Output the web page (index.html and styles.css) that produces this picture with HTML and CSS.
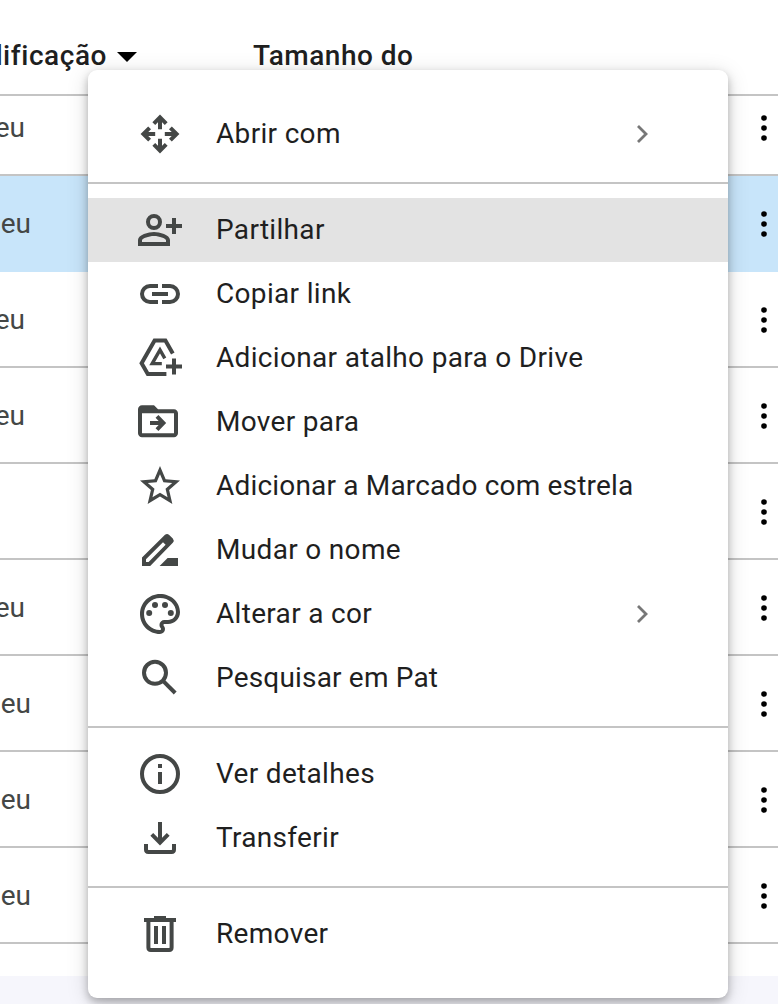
FILE: index.html
```html
<!DOCTYPE html>
<html lang="pt">
<head>
  <meta charset="UTF-8">
  <meta name="viewport" content="width=device-width, initial-scale=1.0">
  <title>Drive</title>
  <link rel="stylesheet" href="styles.css">
</head>
<body>
  <svg class="defs">
    <symbol id="dots" viewBox="0 0 8 28">
      <circle cx="4" cy="4" r="2.8"/><circle cx="4" cy="14" r="2.8"/><circle cx="4" cy="24" r="2.8"/>
    </symbol>
    <symbol id="chevron" viewBox="0 0 12 20">
      <path d="M2 2l8 8-8 8" fill="none" stroke="currentColor" stroke-width="2.8"/>
    </symbol>
  </svg>

  <!-- file list -->
  <main class="files">
    <div class="files-header">
      <div class="col-date"><span>dificação</span></div>
      <svg class="caret" viewBox="0 0 20 10"><path d="M0 0h20L10 10z"/></svg>
      <div class="col-size">Tamanho do</div>
    </div>
    <div class="row first"><span class="owner cut">eu</span><svg class="dots"><use href="#dots"/></svg></div>
    <div class="row selected"><span class="owner">eu</span><svg class="dots"><use href="#dots"/></svg></div>
    <div class="row"><span class="owner cut">eu</span><svg class="dots"><use href="#dots"/></svg></div>
    <div class="row"><span class="owner cut">eu</span><svg class="dots"><use href="#dots"/></svg></div>
    <div class="row"><span class="owner"></span><svg class="dots"><use href="#dots"/></svg></div>
    <div class="row"><span class="owner cut">eu</span><svg class="dots"><use href="#dots"/></svg></div>
    <div class="row"><span class="owner">eu</span><svg class="dots"><use href="#dots"/></svg></div>
    <div class="row"><span class="owner">eu</span><svg class="dots"><use href="#dots"/></svg></div>
    <div class="row"><span class="owner">eu</span><svg class="dots"><use href="#dots"/></svg></div>
  </main>

  <!-- context menu -->
  <nav class="menu">
    <div class="item">
      <svg class="icon line" viewBox="0 0 24 24"><path d="M12 9.6V4M8.9 6.8L12 3.7l3.1 3.1M12 14.4V20M8.9 17.2l3.1 3.1 3.1-3.1M9.6 12H4M6.8 8.9L3.7 12l3.1 3.1M14.4 12H20M17.2 8.9l3.1 3.1-3.1 3.1"/></svg>
      <span class="label">Abrir com</span>
      <svg class="chevron"><use href="#chevron"/></svg>
    </div>
    <hr>
    <div class="item active">
      <svg class="icon" viewBox="0 0 24 24"><path fill-rule="evenodd" d="M9 4a4 4 0 1 0 0 8 4 4 0 0 0 0-8zm0 2a2 2 0 1 1 0 4 2 2 0 0 1 0-4zM9 13c-2.67 0-8 1.34-8 4v3h16v-3c0-2.66-5.33-4-8-4zm6 5H3v-.99C3.2 16.29 6.3 15 9 15s5.8 1.29 6 2v1zM18 6h2v3h3v2h-3v3h-2v-3h-3V9h3z"/></svg>
      <span class="label">Partilhar</span>
    </div>
    <div class="item">
      <svg class="icon line" viewBox="0 0 24 24"><path d="M11 8H7a4 4 0 0 0 0 8h4M13 8h4a4 4 0 0 1 0 8h-4M8 12h8"/></svg>
      <span class="label">Copiar link</span>
    </div>
    <div class="item">
      <svg class="icon line" viewBox="0 0 24 24"><path d="M18.4 9.8L14.7 3.3H9.3L2.8 14.6 5.9 20h9.3M19 12.2v8M15 16.2h8"/><path class="inner" d="M12.9 14.8H8.1L12 8l2.4 4.2"/></svg>
      <span class="label">Adicionar atalho para o Drive</span>
    </div>
    <div class="item">
      <svg class="icon" viewBox="0 0 24 24"><path fill-rule="evenodd" d="M19 5.6h-8l-2-2H3c-1.1 0-2 .9-2 2v12c0 1.1.9 2 2 2h16c1.1 0 2-.9 2-2v-10c0-1.1-.9-2-2-2zm0 12H3v-10h16z"/><path class="stroke" d="M7 12.5h6.5M10.5 9.2l3.2 3.3-3.2 3.3"/></svg>
      <span class="label">Mover para</span>
    </div>
    <div class="item">
      <svg class="icon" viewBox="0 0 24 24"><path d="M22 9.24l-7.19-.62L12 2 9.19 8.63 2 9.24l5.46 4.73L5.82 21 12 17.27 18.18 21l-1.63-7.03L22 9.24zM12 15.4l-3.76 2.27 1-4.28-3.32-2.88 4.38-.38L12 6.1l1.71 4.04 4.38.38-3.32 2.88 1 4.28L12 15.4z"/></svg>
      <span class="label long">Adicionar a Marcado com estrela</span>
    </div>
    <div class="item">
      <svg class="icon" viewBox="0 0 24 24"><path fill-rule="evenodd" d="M3 20v-4.2L14.5 4.4q1.1-.8 2.1.1l1.8 1.8q.9 1 0 2.1L7.1 20zM5 18h1.3l8.5-8.6-1.3-1.3L5 16.6zM15.8 16H21v4h-9.2z"/></svg>
      <span class="label">Mudar o nome</span>
    </div>
    <div class="item">
      <svg class="icon" viewBox="0 0 24 24"><path d="M12 22C6.49 22 2 17.51 2 12S6.49 2 12 2s10 4.04 10 9c0 3.31-2.69 6-6 6h-1.77c-.28 0-.5.22-.5.5 0 .12.05.23.13.33.41.47.64 1.06.64 1.67A2.5 2.5 0 0 1 12 22zm0-18c-4.41 0-8 3.59-8 8s3.59 8 8 8c.28 0 .5-.22.5-.5a.54.54 0 0 0-.14-.35c-.41-.46-.63-1.05-.63-1.65a2.5 2.5 0 0 1 2.5-2.5H16c2.21 0 4-1.79 4-4 0-3.86-3.59-7-8-7z"/><circle cx="6.6" cy="11.5" r="1.5"/><circle cx="9.5" cy="7.5" r="1.5"/><circle cx="14.5" cy="7.5" r="1.5"/><circle cx="17.4" cy="11.5" r="1.5"/></svg>
      <span class="label">Alterar a cor</span>
      <svg class="chevron"><use href="#chevron"/></svg>
    </div>
    <div class="item">
      <svg class="icon line" viewBox="0 0 24 24"><circle cx="9.5" cy="9.4" r="5.5"/><path d="M13.4 13.3l6.2 6.2"/></svg>
      <span class="label long">Pesquisar em Pat</span>
    </div>
    <hr>
    <div class="item">
      <svg class="icon line" viewBox="0 0 24 24"><circle cx="12" cy="12" r="9"/><path d="M12 7v2M12 11v6"/></svg>
      <span class="label">Ver detalhes</span>
    </div>
    <div class="item">
      <svg class="icon line" viewBox="0 0 24 24"><path d="M12 4v10.5M7.9 10.2l4.1 4.1 4.1-4.1M5 15v2.8Q5 19 6.2 19h11.6q1.2 0 1.2-1.2V15"/></svg>
      <span class="label">Transferir</span>
    </div>
    <hr>
    <div class="item">
      <svg class="icon line" viewBox="0 0 24 24"><path d="M4 5h16M9 4h6M6.2 5v13.8Q6.2 20 7.4 20h9.2q1.2 0 1.2-1.2V5M10 8v9M14 8v9"/></svg>
      <span class="label">Remover</span>
    </div>
  </nav>
</body>
</html>
```
FILE: styles.css
```css
* {
    box-sizing: border-box;
}
body {
    margin: 0;
    height: 1004px;
    position: relative;
    overflow: hidden;
    background: #f6f6fc;
    font-family: Roboto, "Noto Sans", sans-serif;
    font-size: 28px;
    color: #1f1f1f;
}
.defs {
    display: none;
}

/* file list */
.files {
    height: 976px;
    background: #fff;
}
.files-header {
    display: flex;
    align-items: center;
    height: 96px;
    padding-top: 16px;
    border-bottom: 2px solid #c4c4c4;
    font-weight: 500;
    white-space: nowrap;
}
.col-date {
    display: flex;
    justify-content: flex-end;
    width: 107px;
    overflow: hidden;
    letter-spacing: 0.55px;
}
.caret {
    width: 20px;
    height: 10px;
    margin: 3px 0 0 10px;
}
.col-size {
    margin-left: 116px;
    letter-spacing: 0.5px;
}
.row {
    display: flex;
    align-items: center;
    justify-content: space-between;
    height: 96px;
    padding: 2px 10px 0 0;
    border-bottom: 2px solid #c4c4c4;
}
.row.first {
    height: 80px;
    padding-bottom: 16px;
}
.row.selected {
    background: #c8e5fa;
    border-bottom-color: #c8e5fa;
}
.owner {
    display: flex;
    justify-content: flex-end;
    width: 31px;
    padding-bottom: 2px;
    color: #444746;
}
.owner.cut {
    width: 25px;
    margin-right: 6px;
}
.dots {
    width: 8px;
    height: 28px;
}

/* context menu */
.menu {
    position: absolute;
    top: 70px;
    left: 88px;
    width: 640px;
    height: 928px;
    padding: 32px 0;
    background: #fff;
    border-radius: 9px;
    box-shadow: 0 4px 8px rgba(0, 0, 0, 0.26), 0 4px 22px rgba(0, 0, 0, 0.15);
}
.menu hr {
    height: 2px;
    margin: 16px 0 14px;
    border: none;
    background: #c4c4c4;
}
.item {
    display: flex;
    align-items: center;
    height: 64px;
    padding: 0 80px 0 48px;
}
.item.active {
    background: #e3e3e3;
}
.icon {
    width: 48px;
    height: 48px;
    margin-right: 32px;
    fill: #444746;
}
.icon.line,
.icon .stroke {
    fill: none;
    stroke: #444746;
    stroke-width: 2;
}
.icon .inner {
    stroke-width: 1.7;
}
.label {
    flex: 1;
    padding-bottom: 2px;
    letter-spacing: 0.32px;
    white-space: nowrap;
}
.label.long {
    letter-spacing: 0.18px;
}
.chevron {
    width: 12px;
    height: 20px;
    color: #777;
}
```
